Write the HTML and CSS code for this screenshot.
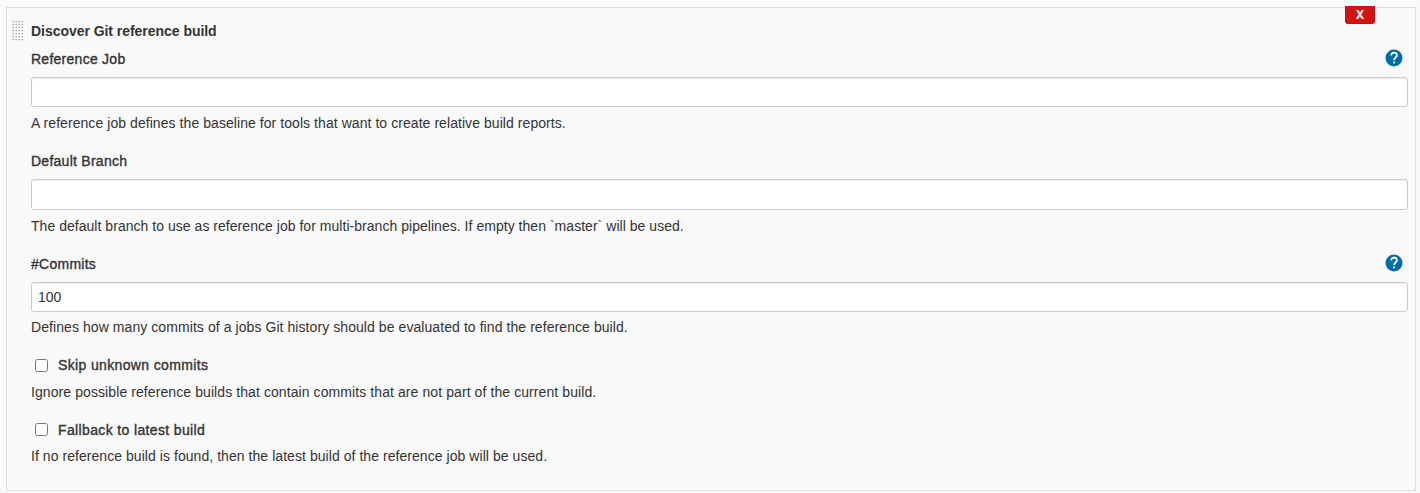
FILE: index.html
```html
<!DOCTYPE html>
<html lang="en">
<head>
<meta charset="utf-8">
<title>Discover Git reference build</title>
<link rel="stylesheet" href="styles.css">
</head>
<body>
<section class="panel">
  <svg class="drag-handle" width="11" height="20" aria-hidden="true">
    <defs><pattern id="dots" width="3" height="3" patternUnits="userSpaceOnUse"><rect width="1" height="1" fill="#ccc"/><rect x="1" width="1" height="1" fill="#aaa"/><rect x="1" y="1" width="1" height="1" fill="#ddd"/></pattern></defs>
    <rect width="11" height="20" fill="url(#dots)"/>
  </svg>
  <button class="delete" type="button" aria-label="Delete"><span>X</span></button>
  <h1 class="title">Discover Git reference build</h1>

  <div class="field">
    <div class="field-head"><label class="label" for="job">Reference Job</label>
      <svg class="help-icon" width="18" height="18" viewBox="0 0 18 18"><circle cx="9" cy="9" r="8.5" fill="#006ea6"/><path d="M6.2 6.6C6.2 4.8 7.3 3.7 9.1 3.7C10.9 3.7 11.9 4.8 11.9 6.2C11.9 8.3 9.1 8.6 9.1 11.3" fill="none" stroke="#fff" stroke-width="1.7"/><rect x="8.2" y="12.6" width="1.8" height="1.8" fill="#fff"/></svg>
    </div>
    <input class="input" id="job" type="text">
    <p class="help help-job">A reference job defines the baseline for tools that want to create relative build reports.</p>
  </div>

  <div class="field">
    <div class="field-head"><label class="label" for="branch">Default Branch</label></div>
    <input class="input input-branch" id="branch" type="text">
    <p class="help help-branch">The default branch to use as reference job for multi-branch pipelines. If empty then `master` will be used.</p>
  </div>

  <div class="field field-commits">
    <div class="field-head"><label class="label" for="commits">#Commits</label>
      <svg class="help-icon" width="18" height="18" viewBox="0 0 18 18"><circle cx="9" cy="9" r="8.5" fill="#006ea6"/><path d="M6.2 6.6C6.2 4.8 7.3 3.7 9.1 3.7C10.9 3.7 11.9 4.8 11.9 6.2C11.9 8.3 9.1 8.6 9.1 11.3" fill="none" stroke="#fff" stroke-width="1.7"/><rect x="8.2" y="12.6" width="1.8" height="1.8" fill="#fff"/></svg>
    </div>
    <input class="input" id="commits" type="text" value="100">
    <p class="help help-commits">Defines how many commits of a jobs Git history should be evaluated to find the reference build.</p>
  </div>

  <div class="field">
    <div class="check-row"><input class="check" id="skip" type="checkbox"><label class="label" for="skip">Skip unknown commits</label></div>
    <p class="help help-skip">Ignore possible reference builds that contain commits that are not part of the current build.</p>
  </div>

  <div class="field field-fallback">
    <div class="check-row"><input class="check check-fallback" id="latest" type="checkbox"><label class="label" for="latest">Fallback to latest build</label></div>
    <p class="help help-latest">If no reference build is found, then the latest build of the reference job will be used.</p>
  </div>
</section>
</body>
</html>
```
FILE: styles.css
```css
* { box-sizing: border-box; }
body {
  margin: 0;
  overflow: hidden;
  background: #f9f9f9;
  color: #333;
  font: 14px/20px "Liberation Sans", Arial, sans-serif;
}
.panel {
  position: relative;
  height: 484px;
  margin: 7px 4px 0 6px;
  padding: 13px 7px 0 24px;
  border: 1px solid #ddd;
}
.drag-handle { position: absolute; left: 5px; top: 13px; }
.delete {
  position: absolute;
  top: -2px;
  right: 40px;
  width: 30px;
  height: 18px;
  padding: 0;
  border: 1px solid #c41212;
  border-top: 0;
  border-radius: 0 0 3px 3px;
  background: #d01414;
  color: #fff;
  font: bold 12px/18px "Noto Sans", "Open Sans", sans-serif;
}
.title { margin: 0 0 8px; font-size: 14px; line-height: 20px; font-weight: bold; letter-spacing: -.04px; }
.field { margin-bottom: 18px; }
.field-head { display: flex; justify-content: space-between; height: 20px; margin-bottom: 8px; padding-right: 5px; }
.label { -webkit-text-stroke: 0.35px #333; white-space: nowrap; letter-spacing: .26px; }
.input {
  display: block;
  width: 100%;
  height: 30px;
  padding: 0 6px;
  border: 1px solid #ccc;
  border-radius: 3px;
  background: #fff;
  box-shadow: inset 0 1px 1px rgba(0, 0, 0, .075);
  color: #333;
  font: inherit;
}
.input-branch { height: 31px; }
.help { margin: 6px 0 0; white-space: nowrap; }
.help-job { letter-spacing: .062px; }
.help-branch { letter-spacing: .035px; }
.help-commits { letter-spacing: .073px; }
.help-skip { letter-spacing: .087px; }
.help-latest { letter-spacing: .054px; }
.field-commits .help { margin-top: 5px; }
.check-row { display: flex; height: 20px; padding-left: 4px; }
.check-row .label { letter-spacing: .36px; }
.check { width: 13px; height: 13px; margin: 4px 10px 0 0; }
.check-row + .help { margin-top: 7px; }
.field-fallback .help { margin-top: 6px; }
.check-fallback { margin-top: 3px; }
```
